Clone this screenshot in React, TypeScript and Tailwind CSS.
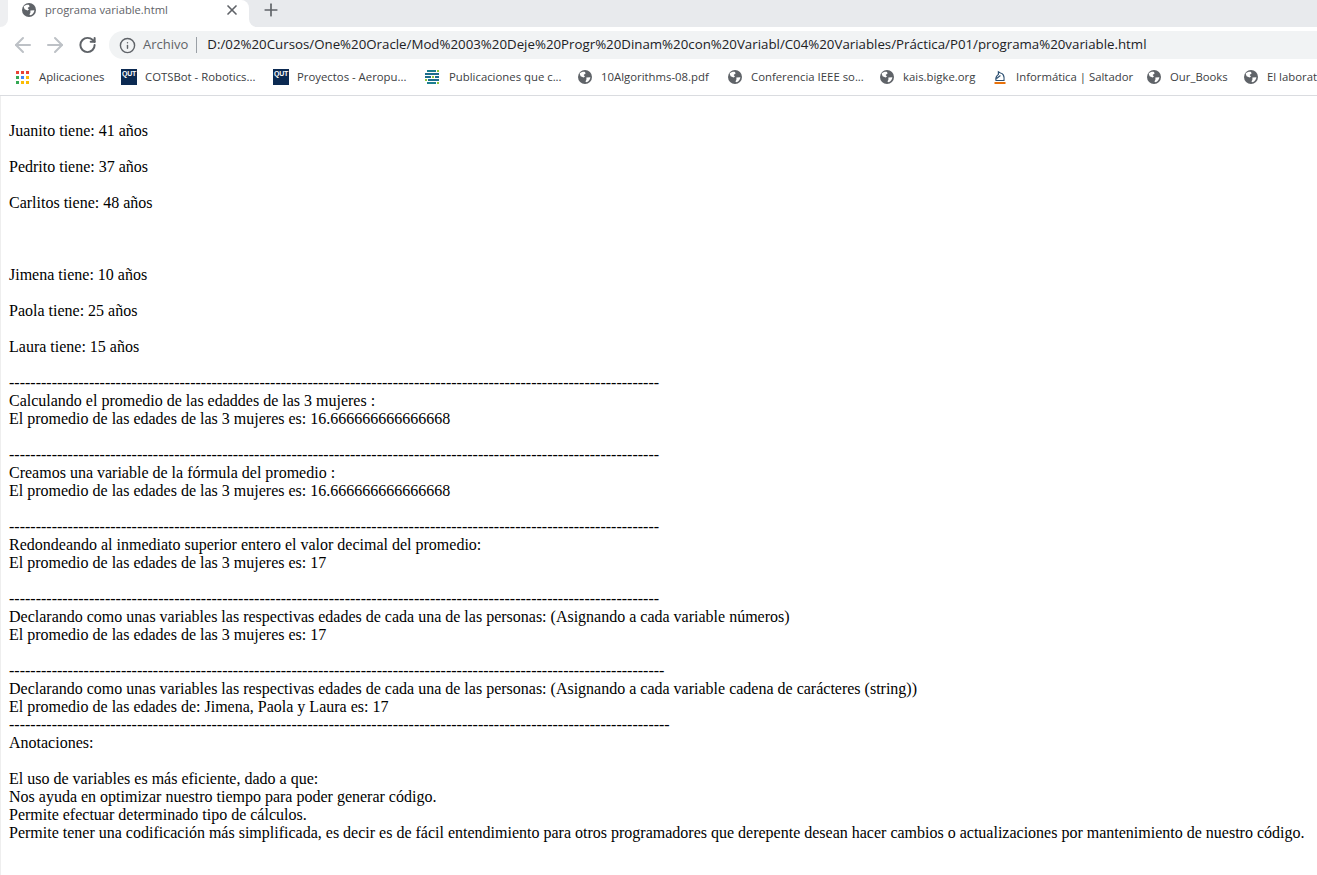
import { ArrowLeft, ArrowRight, Info, Plus, RotateCw, X } from "lucide-react";

function Globe({ className }: { className: string }) {
  return (
    <svg viewBox="0 0 16 16" className={className}>
      <circle cx="8" cy="8" r="7" fill="#5f6368" />
      <path d="M2.6 4.6 C4 3 6.5 2.6 8 3 L8.6 4.6 L6.6 6 L8 7.4 L6.6 8.6 L3.6 7.2 Z" fill="#fff" />
      <path d="M9.4 8.4 L13.4 8.2 C13.2 10.4 11.8 12.4 9.6 13.2 L8.4 12.6 L9.4 10.8 Z" fill="#fff" />
    </svg>
  );
}

function QutIcon() {
  return (
    <div className="w-4 h-4 bg-[#0c2a52] text-white text-[7px] leading-[9px] font-bold text-center tracking-[-0.3px] font-['Liberation_Sans',sans-serif]">
      QUT
    </div>
  );
}

function AppsIcon() {
  const colors = ["#ea4335", "#ea4335", "#ea4335", "#34a853", "#4285f4", "#fbbc05", "#34a853", "#fbbc05", "#fbbc05"];
  return (
    <div className="grid grid-cols-3 gap-[2px] w-[15px] pr-[2px]">
      {colors.map((c, i) => (
        <span key={i} className="w-[3px] h-[3px]" style={{ background: c }} />
      ))}
    </div>
  );
}

function ChessIcon() {
  return (
    <svg viewBox="0 0 16 16" className="w-4 h-4">
      <path
        d="M4 11.5 C3.4 9 4.6 6.8 6.4 5.4 L6.4 2.8 L8.4 4 C11 4.2 12.6 7 12 11.5 Z M4.6 9.4 L8.4 6.6"
        fill="none"
        stroke="#2f5273"
        strokeWidth="1.2"
      />
      <rect x="2.5" y="13" width="11" height="2" fill="#e8710a" />
    </svg>
  );
}

function SheetIcon() {
  return (
    <svg viewBox="0 0 16 16" className="w-4 h-4 -ml-px mr-px">
      <rect x="3" y="1" width="9" height="2" fill="#1c7f8f" />
      <rect x="13" y="1" width="2" height="2" fill="#8cc63f" />
      <rect x="1" y="4" width="14" height="2" fill="#1c6e8c" />
      <rect x="1" y="7" width="6" height="2" fill="#1c6e8c" />
      <rect x="8" y="7" width="2" height="2" fill="#8cc63f" />
      <rect x="11" y="7" width="4" height="2" fill="#1c6e8c" />
      <rect x="1" y="10" width="2" height="2" fill="#8cc63f" />
      <rect x="4" y="10" width="11" height="2" fill="#1c6e8c" />
      <rect x="3" y="13" width="9" height="2" fill="#1c7f8f" />
      <rect x="13" y="13" width="2" height="2" fill="#8cc63f" />
    </svg>
  );
}

const globe = <Globe className="w-4 h-4" />;

const bookmarks = [
  { icon: <AppsIcon />, label: "Aplicaciones", width: "w-[105px]" },
  { icon: <QutIcon />, label: "COTSBot - Robotics...", width: "w-[152px]" },
  { icon: <QutIcon />, label: "Proyectos - Aeropu...", width: "w-[152px]" },
  { icon: <SheetIcon />, label: "Publicaciones que c...", width: "w-[152px]" },
  { icon: globe, label: "10Algorithms-08.pdf", width: "w-[150px]" },
  { icon: globe, label: "Conferencia IEEE so...", width: "w-[152px]" },
  { icon: globe, label: "kais.bigke.org", width: "w-[113px]" },
  { icon: <ChessIcon />, label: "Informática | Saltador", width: "w-[154px]" },
  { icon: globe, label: "Our_Books", width: "w-[97px]" },
  { icon: globe, label: "El laboratorio", width: "w-[110px]" },
];

const d122 = "-".repeat(122);

const lines = [
  "",
  "Juanito tiene: 41 años",
  "",
  "Pedrito tiene: 37 años",
  "",
  "Carlitos tiene: 48 años",
  "",
  "",
  "",
  "Jimena tiene: 10 años",
  "",
  "Paola tiene: 25 años",
  "",
  "Laura tiene: 15 años",
  "",
  d122,
  "Calculando el promedio de las edaddes de las 3 mujeres :",
  "El promedio de las edades de las 3 mujeres es: 16.666666666666668",
  "",
  d122,
  "Creamos una variable de la fórmula del promedio :",
  "El promedio de las edades de las 3 mujeres es: 16.666666666666668",
  "",
  d122,
  "Redondeando al inmediato superior entero el valor decimal del promedio:",
  "El promedio de las edades de las 3 mujeres es: 17",
  "",
  d122,
  "Declarando como unas variables las respectivas edades de cada una de las personas: (Asignando a cada variable números)",
  "El promedio de las edades de las 3 mujeres es: 17",
  "",
  "-".repeat(123),
  "Declarando como unas variables las respectivas edades de cada una de las personas: (Asignando a cada variable cadena de carácteres (string))",
  "El promedio de las edades de: Jimena, Paola y Laura es: 17",
  "-".repeat(124),
  "Anotaciones:",
  "",
  "El uso de variables es más eficiente, dado a que:",
  "Nos ayuda en optimizar nuestro tiempo para poder generar código.",
  "Permite efectuar determinado tipo de cálculos.",
  "Permite tener una codificación más simplificada, es decir es de fácil entendimiento para otros programadores que derepente desean hacer cambios o actualizaciones por mantenimiento de nuestro código.",
];

export default function App() {
  return (
    <div className="w-[1317px] h-[875px] overflow-hidden bg-white flex flex-col">
      {/* Tab strip */}
      <div className="h-[27px] bg-[#e8eaed] flex items-stretch shrink-0">
        <div className="w-[8px] bg-white">
          <div className="w-full h-full bg-[#eeeff1] rounded-br-[8px]" />
        </div>
        <div className="w-[241px] bg-white rounded-tr-lg flex items-start pt-[2px] pl-[13px] pr-[9px] font-['Open_Sans',sans-serif] text-[11.2px] leading-[14px] text-[#5f6368]">
          <Globe className="w-[16px] h-[16px] shrink-0" />
          <span className="ml-[8px] mt-px flex-1 whitespace-nowrap">programa variable.html</span>
          <X className="w-[16px] h-[16px] text-[#5f6368]" strokeWidth={2.5} />
        </div>
        <div className="w-[8px] bg-white">
          <div className="w-full h-full bg-[#e8eaed] rounded-bl-[8px]" />
        </div>
        <Plus className="w-[20px] h-[20px] ml-[4px] mt-[0px] text-[#5f6368]" strokeWidth={2} />
      </div>

      {/* Toolbar */}
      <div className="h-[36px] bg-white flex items-start pt-[4px] shrink-0 pl-[11px]">
        <ArrowLeft className="w-[24px] h-[28px] text-[#bdc1c6]" strokeWidth={2} />
        <ArrowRight className="w-[24px] h-[28px] ml-[8px] text-[#bdc1c6]" strokeWidth={2} />
        <RotateCw className="w-[19px] h-[28px] ml-[11px] text-[#5f6368]" strokeWidth={2.5} />
        <div className="ml-[12px] flex-1 h-[28px] bg-[#f1f3f4] rounded-l-full flex items-center pl-[10px] font-['Open_Sans',sans-serif] text-[13px] whitespace-nowrap">
          <Info className="w-[17px] h-[17px] text-[#5f6368]" strokeWidth={2} />
          <span className="ml-[7px] text-[#5f6368]">Archivo</span>
          <span className="ml-[8px] w-px h-[16px] bg-[#9aa0a6]" />
          <span className="ml-[10px] text-[13.29px] text-[#202124]">
            D:/02%20Cursos/One%20Oracle/Mod%2003%20Deje%20Progr%20Dinam%20con%20Variabl/C04%20Variables/Práctica/P01/programa%20variable.html
          </span>
        </div>
      </div>

      {/* Bookmarks bar */}
      <div className="h-[33px] bg-white border-b border-[#dadce0] flex items-start pt-[6px] shrink-0 pl-[16px] overflow-hidden font-['Open_Sans',sans-serif] text-[11.35px] leading-[16px] text-[#3c4043] whitespace-nowrap">
        {bookmarks.map((b) => (
          <div key={b.label} className={`${b.width} shrink-0 flex items-center gap-[8px]`}>
            {b.icon}
            <span>{b.label}</span>
          </div>
        ))}
      </div>

      {/* Page */}
      <div className="flex-1 border-l border-[#eeeeee] pl-[8px] pt-[8px] font-['Liberation_Serif',serif] text-[16px] leading-[18px] text-black whitespace-nowrap">
        {lines.map((line, i) => (
          <div key={i} className="h-[18px]">
            {line}
          </div>
        ))}
      </div>
    </div>
  );
}
